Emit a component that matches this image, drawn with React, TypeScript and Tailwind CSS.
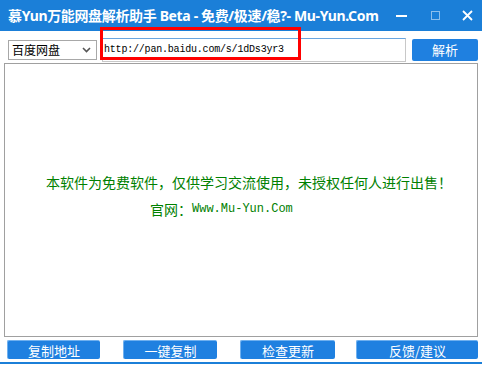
import { useState } from 'react'

const CJK = '"Noto Sans CJK SC", "Noto Sans", sans-serif'
const TITLE = '"Noto Sans", "Noto Sans CJK SC", sans-serif'
const MONO = '"Liberation Mono", "Noto Sans CJK SC", monospace'

const BOTTOM_BUTTONS = [
  { label: '复制地址', w: 'w-[93px]', ml: 'ml-[7px]' },
  { label: '一键复制', w: 'w-[94px]', ml: 'ml-[23px]' },
  { label: '检查更新', w: 'w-[95px]', ml: 'ml-[23px]' },
  { label: '反馈/建议', w: 'w-[122px]', ml: 'ml-[21px]' },
]

export default function App() {
  const [url, setUrl] = useState('http://pan.baidu.com/s/1dDs3yr3')

  return (
    <div className="relative flex h-[365px] w-[482px] flex-col overflow-hidden bg-white" style={{ fontFamily: CJK }}>
      {/* title bar */}
      <div className="flex h-[31px] shrink-0 items-center bg-[#1b7fd8] text-white">
        <div
          className="whitespace-nowrap pl-[8px] text-[14px] font-bold leading-none tracking-[-0.35px]"
          style={{ fontFamily: TITLE }}
        >
          慕Yun万能网盘解析助手 Beta - 免费/极速/稳?- Mu-Yun.Com
        </div>
        <div className="ml-auto flex h-full shrink-0 items-center">
          <div className="flex w-[36px] justify-center">
            <div className="h-[2px] w-[11px] bg-white" />
          </div>
          <div className="flex w-[33px] justify-center">
            <div className="h-[9px] w-[9px] border border-white/50" />
          </div>
          <div className="flex w-[30px] justify-center">
            <svg width="11" height="11" viewBox="0 0 11 11">
              <path d="M1 1 L10 10 M10 1 L1 10" stroke="white" strokeWidth="1.8" />
            </svg>
          </div>
        </div>
      </div>

      {/* url row */}
      <div className="flex h-[32px] shrink-0 items-center pt-[5px]">
        <div className="ml-[8px] flex h-[20px] w-[89px] items-center justify-between border border-[#a8a8a8] bg-white px-[3px] text-[12px] text-black">
          <span>百度网盘</span>
          <svg width="9" height="6" viewBox="0 0 9 6" className="mr-[2px]">
            <path d="M1 1 L4.5 4.5 L8 1" stroke="#555" strokeWidth="1.6" fill="none" />
          </svg>
        </div>
        <div className="ml-[5px] flex h-[24px] w-[304px] items-center border border-[#c8c8c8] border-t-[#6aa6e0] bg-white">
          <input
            value={url}
            onChange={e => setUrl(e.target.value)}
            className="w-full bg-transparent pl-[1px] text-[10px] tracking-[-0.2px] text-black outline-none"
            style={{ fontFamily: MONO }}
          />
        </div>
        <button className="ml-[6px] flex h-[22px] w-[66px] items-center justify-center rounded-[2px] bg-[#1f80e0] text-[13px] text-white">
          解析
        </button>
      </div>

      {/* main panel */}
      <div className="mx-[4px] flex h-[274px] flex-col border border-[#a0a0a0] bg-white text-[#008000]">
        <div className="pl-[41px] pt-[108px] text-[14px] leading-[20px]">
          本软件为免费软件，仅供学习交流使用，未授权任何人进行出售！
        </div>
        <div className="mt-[7px] flex items-center pl-[145px] text-[14px] leading-[20px]">
          <span>官网：</span>
          <span className="text-[12px]" style={{ fontFamily: MONO }}>Www.Mu-Yun.Com</span>
        </div>
      </div>

      {/* bottom buttons */}
      <div className="mt-[3px] flex h-[19px] shrink-0">
        {BOTTOM_BUTTONS.map(b => (
          <button
            key={b.label}
            className={`${b.w} ${b.ml} flex h-[19px] items-center justify-center rounded-[2px] border-l border-t border-[#6fb0ef] bg-[#1f80e0] text-[13px] leading-none text-white`}
          >
            {b.label}
          </button>
        ))}
      </div>

      <div className="mt-[3px] h-[2px] w-full bg-[#1b7fd8]" />

      {/* red highlight annotation */}
      <div className="pointer-events-none absolute left-[100px] top-[27px] h-[33px] w-[201px] border-[3px] border-[#ff0000]" />
    </div>
  )
}
